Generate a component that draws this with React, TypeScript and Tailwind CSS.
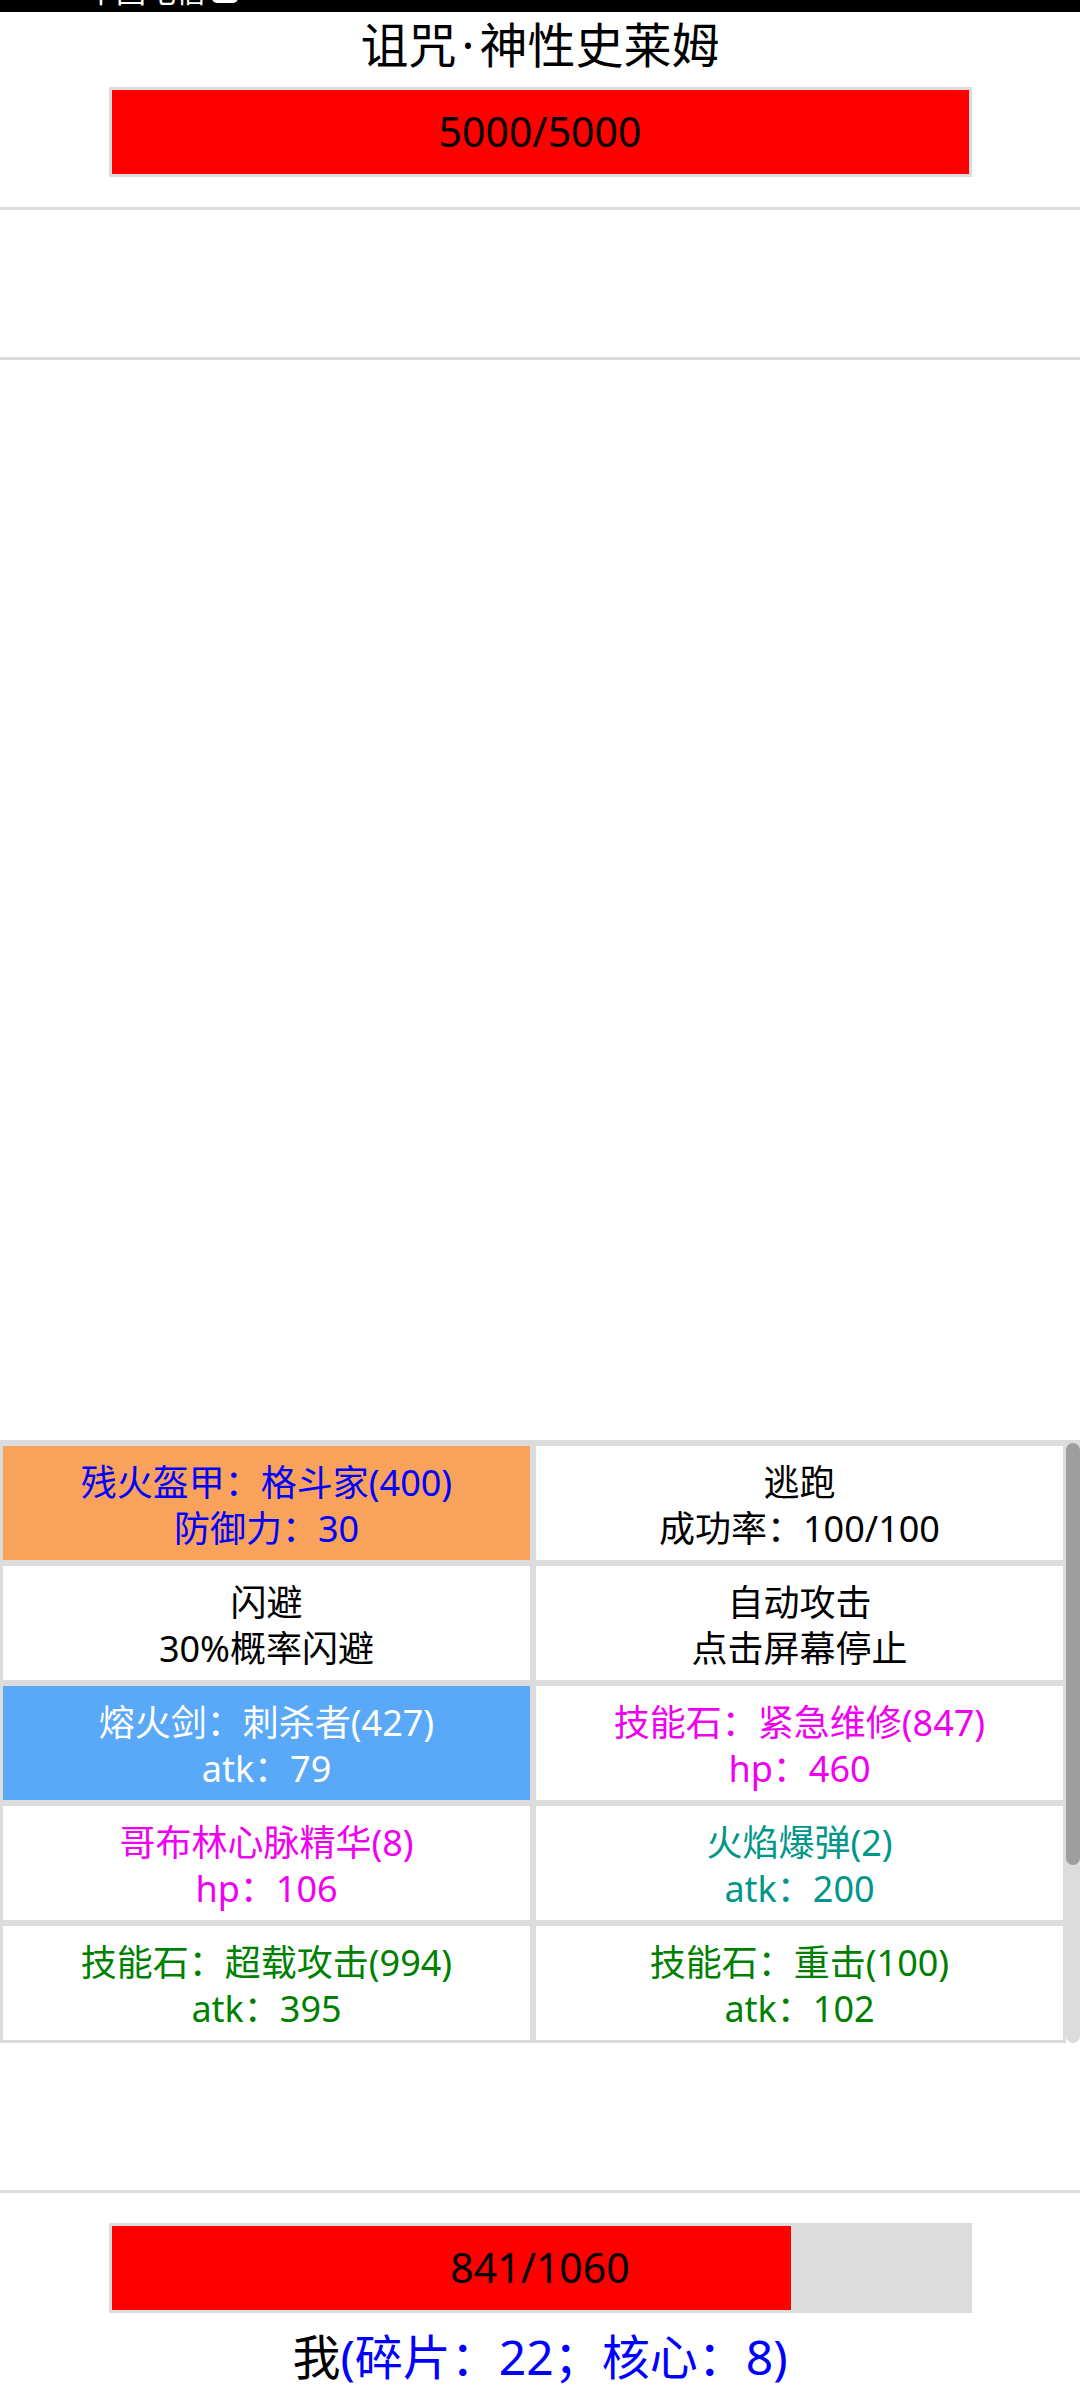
import React from "react";

type Cell = {
  title: string;
  sub: string;
  text: string;
  bg: string;
};

const cells: Cell[] = [
  { title: "残火盔甲：格斗家(400)", sub: "防御力：30", text: "text-[#0000ff]", bg: "bg-[#f9a25b]" },
  { title: "逃跑", sub: "成功率：100/100", text: "text-black", bg: "bg-white" },
  { title: "闪避", sub: "30%概率闪避", text: "text-black", bg: "bg-white" },
  { title: "自动攻击", sub: "点击屏幕停止", text: "text-black", bg: "bg-white" },
  { title: "熔火剑：刺杀者(427)", sub: "atk：79", text: "text-white", bg: "bg-[#5aa8f8]" },
  { title: "技能石：紧急维修(847)", sub: "hp：460", text: "text-[#f000f0]", bg: "bg-white" },
  { title: "哥布林心脉精华(8)", sub: "hp：106", text: "text-[#f000f0]", bg: "bg-white" },
  { title: "火焰爆弹(2)", sub: "atk：200", text: "text-[#009688]", bg: "bg-white" },
  { title: "技能石：超载攻击(994)", sub: "atk：395", text: "text-[#008000]", bg: "bg-white" },
  { title: "技能石：重击(100)", sub: "atk：102", text: "text-[#008000]", bg: "bg-white" },
];

function HpBar({ hp, max }: { hp: number; max: number }) {
  const pct = (hp / max) * 100;
  return (
    <div className="relative mx-auto h-[90px] w-[863px] border-[3px] border-[#dcdcdc] bg-[#dcdcdc]">
      <div className="h-full bg-[#ff0000]" style={{ width: `${pct}%` }} />
      <div className="absolute inset-0 flex items-center justify-center text-[41px] text-black">
        {hp}/{max}
      </div>
    </div>
  );
}

export default function App() {
  return (
    <div className="flex min-h-[2400px] w-full flex-col bg-white font-['Noto_Sans','Noto_Sans_CJK_SC',sans-serif]">
      {/* status bar, mostly cut off */}
      <div className="h-[12px] overflow-hidden bg-black">
        <div className="-mt-[29px] flex items-center gap-[6px] pl-[86px] text-[30px] leading-[40px] text-white">
          <span>中国电信</span>
          <span className="inline-block h-[24px] w-[26px] rounded-[5px] bg-white" />
        </div>
      </div>

      {/* enemy */}
      <div className="border-b-[3px] border-[#dcdcdc] pb-[30px]">
        <h1 className="text-center text-[48px] leading-[66px] text-black">
          诅咒<span className="px-[5px]">·</span>神性史莱姆
        </h1>
        <div className="mt-[9px]">
          <HpBar hp={5000} max={5000} />
        </div>
      </div>

      {/* message area */}
      <div className="h-[150px] border-b-[3px] border-[#dcdcdc]" />

      {/* battle area */}
      <div className="h-[1080px]" />

      {/* actions & items */}
      <div className="flex h-[603px] border-t-[3px] border-[#dcdcdc]">
        <div className="grid flex-1 grid-cols-2 content-start overflow-hidden">
          {cells.map((c) => (
            <div
              key={c.title}
              className={`flex h-[120px] flex-col items-center justify-center border-[3px] border-[#dcdcdc] pt-[6px] text-[36px] leading-[46px] ${c.bg} ${c.text}`}
            >
              <span>{c.title}</span>
              <span>{c.sub}</span>
            </div>
          ))}
        </div>
        <div className="w-[14px] rounded-b-full bg-[#dcdcdc]">
          <div className="h-[422px] rounded-full bg-[#9e9e9e]" />
        </div>
      </div>

      <div className="h-[150px] border-b-[3px] border-[#dcdcdc]" />

      {/* player */}
      <div className="pt-[30px]">
        <HpBar hp={841} max={1060} />
        <p className="mt-[11px] text-center text-[48px] leading-[66px] text-black">
          我<span className="text-[#0000ff]">(碎片：22；核心：8)</span>
        </p>
      </div>
    </div>
  );
}
